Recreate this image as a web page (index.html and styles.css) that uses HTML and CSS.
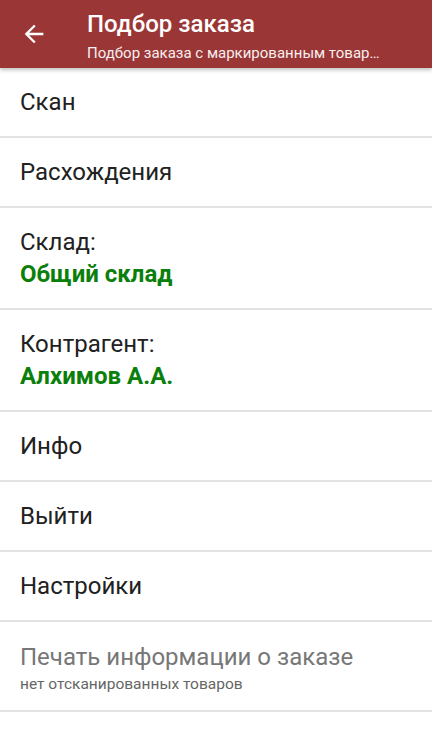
FILE: index.html
```html
<!DOCTYPE html>
<html lang="ru">
  <head>
    <meta charset="UTF-8" />
    <meta name="viewport" content="width=device-width, initial-scale=1.0" />
    <title>Подбор заказа</title>
    <link rel="stylesheet" href="styles.css">
  </head>
  <body>
    <div class="toolbar">
      <button class="back">
        <svg width="28" height="28" viewBox="0 0 24 24">
          <path d="M20 11H7.83l5.59-5.59L12 4l-8 8 8 8 1.41-1.41L7.83 13H20v-2z" fill="#fff" />
        </svg>
      </button>
      <div class="titles">
        <div class="title">Подбор заказа</div>
        <div class="subtitle">Подбор заказа с маркированным товаром</div>
      </div>
    </div>

    <div class="menu">
      <div class="item">Скан</div>
      <div class="item">Расхождения</div>
      <div class="item double">
        <div>Склад:</div>
        <div class="value">Общий склад</div>
      </div>
      <div class="item double">
        <div>Контрагент:</div>
        <div class="value">Алхимов А.А.</div>
      </div>
      <div class="item">Инфо</div>
      <div class="item">Выйти</div>
      <div class="item">Настройки</div>
      <div class="item print disabled">
        <div>Печать информации о заказе</div>
        <div class="hint">нет отсканированных товаров</div>
      </div>
    </div>
  </body>
</html>
```

FILE: styles.css
```css
body {
  margin: 0;
  padding: 0;
  background: #fff;
  font-family: Roboto, "Noto Sans", sans-serif;
  color: #212121;
  width: 432px;
  overflow: hidden;
}
.toolbar {
  height: 68px;
  background: #9b3636;
  display: flex;
  align-items: center;
  box-shadow: 0 2px 4px rgba(0, 0, 0, 0.25);
  position: relative;
}
.back {
  width: 68px;
  height: 68px;
  border: none;
  background: none;
  padding: 0 0 0 20px;
  display: flex;
  align-items: center;
  margin-right: 19px;
}
.titles {
  color: #fff;
  min-width: 0;
  flex: 1;
  padding-right: 44px;
  padding-top: 2px;
}
.title {
  font-size: 24px;
  font-weight: 500;
  line-height: 28px;
  margin-top: 2px;
}
.subtitle {
  font-size: 15px;
  line-height: 20px;
  margin-top: 5px;
  white-space: nowrap;
  overflow: hidden;
  text-overflow: ellipsis;
  opacity: 0.92;
}
.item {
  height: 68px;
  border-bottom: 2px solid #e2e2e2;
  padding: 0 20px;
  display: flex;
  flex-direction: column;
  justify-content: center;
  font-size: 24px;
  line-height: 32px;
}
.item.double {
  height: 100px;
}
.value {
  color: #0b7f0b;
  font-weight: bold;
}
.print {
  height: 90px;
  padding-top: 4px;
  box-sizing: border-box;
}
.disabled {
  color: #777;
}
.hint {
  font-size: 15.5px;
  line-height: 22px;
  color: #666;
}
```
